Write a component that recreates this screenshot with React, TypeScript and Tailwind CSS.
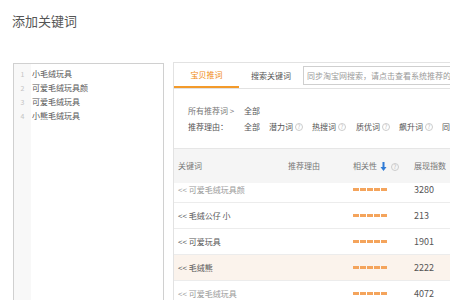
import React from "react";

const Info = () => (
  <span className="ml-[2px] inline-flex h-[8px] w-[8px] items-center justify-center rounded-full border border-[#ccc] text-[6px] leading-none text-[#bbb]">
    ?
  </span>
);

const Bar = () => (
  <div className="flex gap-[1px]">
    {[0, 1, 2, 3, 4].map((i) => (
      <div key={i} className="h-[3px] w-[6px] bg-[#f4a45c]" />
    ))}
  </div>
);

const rows = [
  { word: "可爱毛绒玩具颜", num: "3280", light: true },
  { word: "毛绒公仔 小", num: "213" },
  { word: "可爱玩具", num: "1901" },
  { word: "毛绒熊", num: "2222", active: true },
  { word: "可爱毛绒玩具", num: "4072", light: true },
];

const leftItems = ["小毛绒玩具", "可爱毛绒玩具颜", "可爱毛绒玩具", "小熊毛绒玩具"];

export default function App() {
  return (
    <div className="h-[300px] w-[450px] overflow-hidden bg-white font-['Noto_Sans_CJK_SC',sans-serif]">
      <div className="pl-[12px] pt-[13px] text-[13px] leading-[16px] text-[#555]">添加关键词</div>

      <div className="mt-[33px] flex items-start pl-[13px]">
        {/* left keyword box */}
        <div className="mt-[1px] flex h-[260px] w-[151px] shrink-0 border border-[#d0d0d0]">
          <div className="w-[17px] bg-[#f8f8f8] pt-[3px] text-center text-[7px] leading-[14px] text-[#c4c4c4]">
            {leftItems.map((_, i) => (
              <div key={i}>{i + 1}</div>
            ))}
          </div>
          <div className="pl-[1px] pt-[3px] text-[8px] leading-[14px] text-[#555]">
            {leftItems.map((t) => (
              <div key={t}>{t}</div>
            ))}
          </div>
        </div>

        {/* right panel */}
        <div className="ml-[9px] w-[320px] shrink-0 border-l border-t border-[#e2e2e2]">
          <div className="flex h-[26px] border-b border-[#e2e2e2] text-[8px]">
            <div className="flex w-[65px] items-center justify-center border-b-2 border-[#f39a2a] text-[#f08a10]">
              宝贝推词
            </div>
            <div className="flex w-[64px] items-center justify-center text-[#555]">搜索关键词</div>
            <div className="mt-[3px] flex h-[19px] flex-1 items-center overflow-hidden whitespace-nowrap border border-[#cfcfcf] pl-[3px] text-[#999]">
              同步淘宝网搜索，请点击查看系统推荐的关键词
            </div>
          </div>

          <div className="h-[59px] pl-[14px] pt-[14px] text-[8px] leading-[16px] text-[#555]">
            <div className="flex">
              <span className="w-[56px] text-[#777]">所有推荐词 &gt;</span>
              <span>全部</span>
            </div>
            <div className="flex items-center whitespace-nowrap">
              <span className="w-[56px]">推荐理由：</span>
              <span className="w-[25px]">全部</span>
              <span className="flex w-[43px] items-center">潜力词<Info /></span>
              <span className="flex w-[44px] items-center">热搜词<Info /></span>
              <span className="flex w-[43px] items-center">质优词<Info /></span>
              <span className="flex w-[43px] items-center">飙升词<Info /></span>
              <span>同义词</span>
            </div>
          </div>

          <div className="flex h-[35px] items-center border-t border-[#e6e6e6] bg-[#f5f5f5] text-[8px] text-[#777]">
            <div className="w-[110px] pl-[4px]">关键词</div>
            <div className="w-[65px] pl-[4px]">推荐理由</div>
            <div className="flex w-[61px] items-center pl-[4px]">
              相关性
              <svg width="7" height="9" viewBox="0 0 7 9" className="ml-[3px]">
                <path d="M2.5 0h2v5h2L3.5 9 0.5 5h2z" fill="#2f7bd6" />
              </svg>
              <span className="ml-[2px]"><Info /></span>
            </div>
            <div className="pl-[4px]">展现指数</div>
          </div>

          <div className="h-[120px] overflow-hidden">
            <div className="-mt-[6px]">
              {rows.map((r) => (
                <div
                  key={r.word}
                  className={
                    "flex h-[26px] items-center border-b border-[#ececec] text-[8px] " +
                    (r.active ? "bg-[#fbf3ec] " : "") +
                    (r.light ? "text-[#999]" : "text-[#555]")
                  }
                >
                  <div className="w-[110px] pl-[4px]">&lt;&lt; {r.word}</div>
                  <div className="w-[65px]" />
                  <div className="w-[61px] pl-[4px]">
                    <Bar />
                  </div>
                  <div className="pl-[4px] text-[9px] text-[#555]">{r.num}</div>
                </div>
              ))}
            </div>
          </div>
        </div>
      </div>
    </div>
  );
}
